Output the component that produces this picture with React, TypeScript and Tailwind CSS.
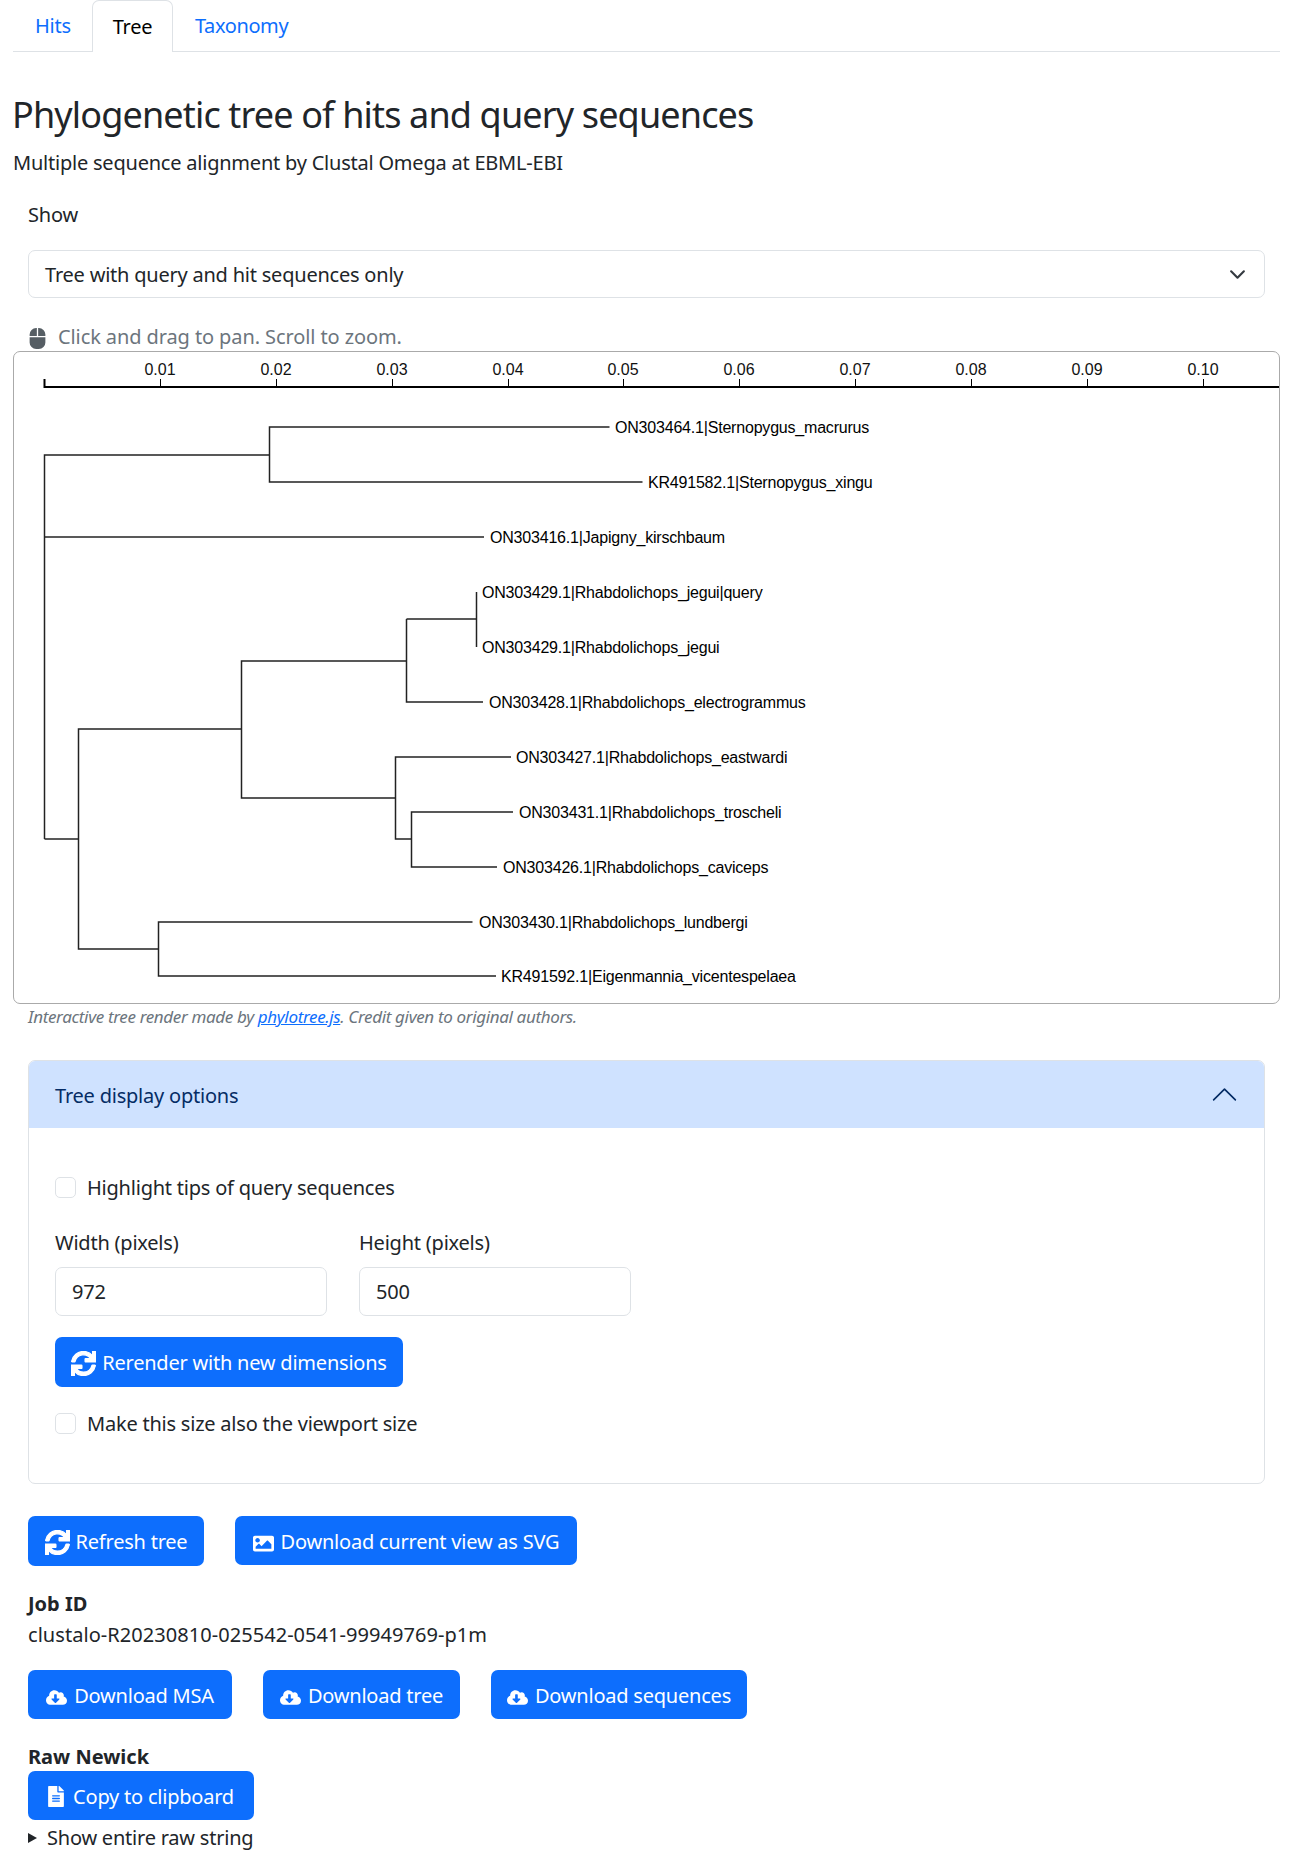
import { FaSync, FaMouse, FaImage, FaCloudDownloadAlt, FaFileAlt } from 'react-icons/fa'

const ticks = [
  { x: 160, label: '0.01' },
  { x: 276, label: '0.02' },
  { x: 392, label: '0.03' },
  { x: 508, label: '0.04' },
  { x: 623, label: '0.05' },
  { x: 739, label: '0.06' },
  { x: 855, label: '0.07' },
  { x: 971, label: '0.08' },
  { x: 1087, label: '0.09' },
  { x: 1203, label: '0.10' },
]

// branch paths, page coordinates read off the reference
const branches = [
  'M44.5 839V455H269.5',
  'M609.5 427H269.5V482H642.5',
  'M44.5 537H484',
  'M44.5 839H78.5',
  'M241.5 729H78.5V949H158.5',
  'M406.5 661H241.5V798H395.5',
  'M476.5 592V647',
  'M406.5 619H476.5',
  'M483 702H406.5V619',
  'M511 757H395.5V839H411.5',
  'M513 812H411.5V867H497',
  'M472.5 922H158.5V976H496',
]

const labels = [
  { x: 615, y: 427, text: 'ON303464.1|Sternopygus_macrurus' },
  { x: 648, y: 482, text: 'KR491582.1|Sternopygus_xingu' },
  { x: 490, y: 537, text: 'ON303416.1|Japigny_kirschbaum' },
  { x: 482, y: 592, text: 'ON303429.1|Rhabdolichops_jegui|query' },
  { x: 482, y: 647, text: 'ON303429.1|Rhabdolichops_jegui' },
  { x: 489, y: 702, text: 'ON303428.1|Rhabdolichops_electrogrammus' },
  { x: 516, y: 757, text: 'ON303427.1|Rhabdolichops_eastwardi' },
  { x: 519, y: 812, text: 'ON303431.1|Rhabdolichops_troscheli' },
  { x: 503, y: 867, text: 'ON303426.1|Rhabdolichops_caviceps' },
  { x: 479, y: 922, text: 'ON303430.1|Rhabdolichops_lundbergi' },
  { x: 501, y: 976, text: 'KR491592.1|Eigenmannia_vicentespelaea' },
]

function TreeChart() {
  return (
    <svg viewBox="14 352 1265 651" className="block w-[1265px] h-[651px] font-['Liberation_Sans',sans-serif] tracking-normal">
      <path d="M44.5 379V387H1279" fill="none" stroke="#000" strokeWidth="2" />
      {ticks.map(t => (
        <g key={t.label}>
          <line x1={t.x + 0.5} x2={t.x + 0.5} y1="379" y2="386" stroke="#000" />
          <text x={t.x} y="375" textAnchor="middle" fontSize="16" fill="#111">{t.label}</text>
        </g>
      ))}
      {branches.map(d => (
        <path key={d} d={d} fill="none" stroke="#222" strokeWidth="1.5" />
      ))}
      {labels.map(l => (
        <text key={l.text} x={l.x} y={l.y + 5.5} fontSize="16" letterSpacing="-0.2" fill="#000">{l.text}</text>
      ))}
    </svg>
  )
}

function Check({ label, className }: { label: string; className: string }) {
  return (
    <div className={`flex items-center h-[30px] ${className}`}>
      <span className="w-[21px] h-[21px] mb-[2px] rounded-[5px] border border-[#dee2e6] bg-white mr-[11px]"></span>
      <span>{label}</span>
    </div>
  )
}

function Btn({ icon, label, className }: { icon: React.ReactNode; label: string; className: string }) {
  return (
    <button className={`flex items-center justify-center pt-[2px] bg-[#0d6efd] text-white rounded-[7px] ${className}`}>
      {icon}
      <span>{label}</span>
    </button>
  )
}

export default function App() {
  return (
    <div className="min-h-[1865px] bg-white pl-[13px] pr-[15px] pb-[12px] text-[20px] leading-[30px] text-[#212529] font-['Noto_Sans',sans-serif] tracking-[-0.22px]">
      <div className="flex h-[52px] border-b border-[#dee2e6] pl-[22px]">
        <a className="w-[57px] pt-[11px] text-[#0d6efd]">Hits</a>
        <a className="w-[81px] h-[52px] pt-[11px] text-center text-black bg-white border border-b-0 border-[#dee2e6] rounded-t-[7px]">Tree</a>
        <a className="pl-[22px] pt-[11px] text-[#0d6efd] tracking-[-0.4px]">Taxonomy</a>
      </div>

      <h1 className="mt-[37px] -ml-[1px] text-[36px] leading-[52px] tracking-[-0.85px]">Phylogenetic tree of hits and query sequences</h1>
      <p className="mt-[7px]">Multiple sequence alignment by Clustal Omega at EBML-EBI</p>

      <div className="px-[15px]">
        <label className="block mt-[22px]">Show</label>
        <div className="flex items-center justify-between mt-[20px] h-[48px] border border-[#dee2e6] rounded-[7px] pl-[16px] pr-[18px]">
          <span className="pt-[2px]">Tree with query and hit sequences only</span>
          <svg viewBox="0 0 16 16" className="w-[17px] h-[17px]" fill="none" stroke="#343a40" strokeWidth="2" strokeLinecap="round" strokeLinejoin="round">
            <path d="m2 5 6 6 6-6" />
          </svg>
        </div>
        <div className="flex items-center mt-[25px] h-[28px] text-[#6c757d] tracking-[-0.1px]">
          <FaMouse className="w-[17px] h-[21px] ml-[1px] mr-[12px] mt-[3px] text-[#565e64]" />
          <span>Click and drag to pan. Scroll to zoom.</span>
        </div>
      </div>

      <div className="w-[1267px] border border-[#aaaaaa] rounded-[7px] overflow-hidden">
        <TreeChart />
      </div>

      <div className="px-[15px]">
        <p className="h-[26px] text-[17px] leading-[26px] italic text-[#6c757d] tracking-[-0.35px]">
          Interactive tree render made by <a className="text-[#0d6efd] underline">phylotree.js</a>. Credit given to original authors.
        </p>

        <div className="mt-[30px] border border-[#dee2e6] rounded-[7px] overflow-hidden">
          <div className="flex items-center justify-between h-[67px] bg-[#cfe2ff] text-[#052c65] pl-[26px] pr-[25px]">
            <span className="pt-[2px]">Tree display options</span>
            <svg viewBox="0 0 16 16" className="w-[29px] h-[29px]" fill="none" stroke="#052c65" strokeWidth="0.9" strokeLinecap="round" strokeLinejoin="round">
              <path d="m2 11 6-6 6 6" />
            </svg>
          </div>
          <div className="pl-[26px] pb-[44px]">
            <Check label="Highlight tips of query sequences" className="mt-[45px]" />
            <div className="flex gap-[32px] mt-[25px]">
              <div className="w-[272px]">
                <label className="block">Width (pixels)</label>
                <div className="flex items-center mt-[9px] h-[49px] border border-[#dee2e6] rounded-[7px] pl-[16px]">972</div>
              </div>
              <div className="w-[272px]">
                <label className="block">Height (pixels)</label>
                <div className="flex items-center mt-[9px] h-[49px] border border-[#dee2e6] rounded-[7px] pl-[16px]">500</div>
              </div>
            </div>
            <Btn icon={<FaSync stroke="currentColor" strokeWidth={24} className="w-[25px] h-[25px] mr-[6px]" />} label="Rerender with new dimensions" className="mt-[21px] w-[348px] h-[50px]" />
            <Check label="Make this size also the viewport size" className="mt-[22px]" />
          </div>
        </div>

        <div className="flex items-start gap-[31px] mt-[32px]">
          <Btn icon={<FaSync stroke="currentColor" strokeWidth={24} className="w-[25px] h-[25px] mr-[6px]" />} label="Refresh tree" className="w-[176px] h-[50px]" />
          <Btn icon={<FaImage className="w-[21px] h-[21px] mr-[7px] mt-[3px]" />} label="Download current view as SVG" className="w-[342px] h-[49px]" />
        </div>

        <p className="mt-[23px] font-bold tracking-normal">Job ID</p>
        <p className="mt-[1px] tracking-[0.05px]">clustalo-R20230810-025542-0541-99949769-p1m</p>

        <div className="flex gap-[31px] mt-[20px]">
          <Btn icon={<FaCloudDownloadAlt className="w-[21px] h-[21px] mr-[7px] mt-[3px]" />} label="Download MSA" className="w-[204px] h-[49px]" />
          <Btn icon={<FaCloudDownloadAlt className="w-[21px] h-[21px] mr-[7px] mt-[3px]" />} label="Download tree" className="w-[197px] h-[49px]" />
          <Btn icon={<FaCloudDownloadAlt className="w-[21px] h-[21px] mr-[7px] mt-[3px]" />} label="Download sequences" className="w-[256px] h-[49px]" />
        </div>

        <p className="mt-[24px] font-bold leading-[28px] tracking-normal">Raw Newick</p>
        <Btn icon={<FaFileAlt className="w-[16px] h-[21px] mr-[9px]" />} label="Copy to clipboard" className="w-[226px] h-[49px]" />
        <div className="flex items-center mt-[3px]">
          <span className="w-0 h-0 border-y-[5px] border-y-transparent border-l-[9px] border-l-[#212529] mr-[10px]"></span>
          <span>Show entire raw string</span>
        </div>
      </div>
    </div>
  )
}
